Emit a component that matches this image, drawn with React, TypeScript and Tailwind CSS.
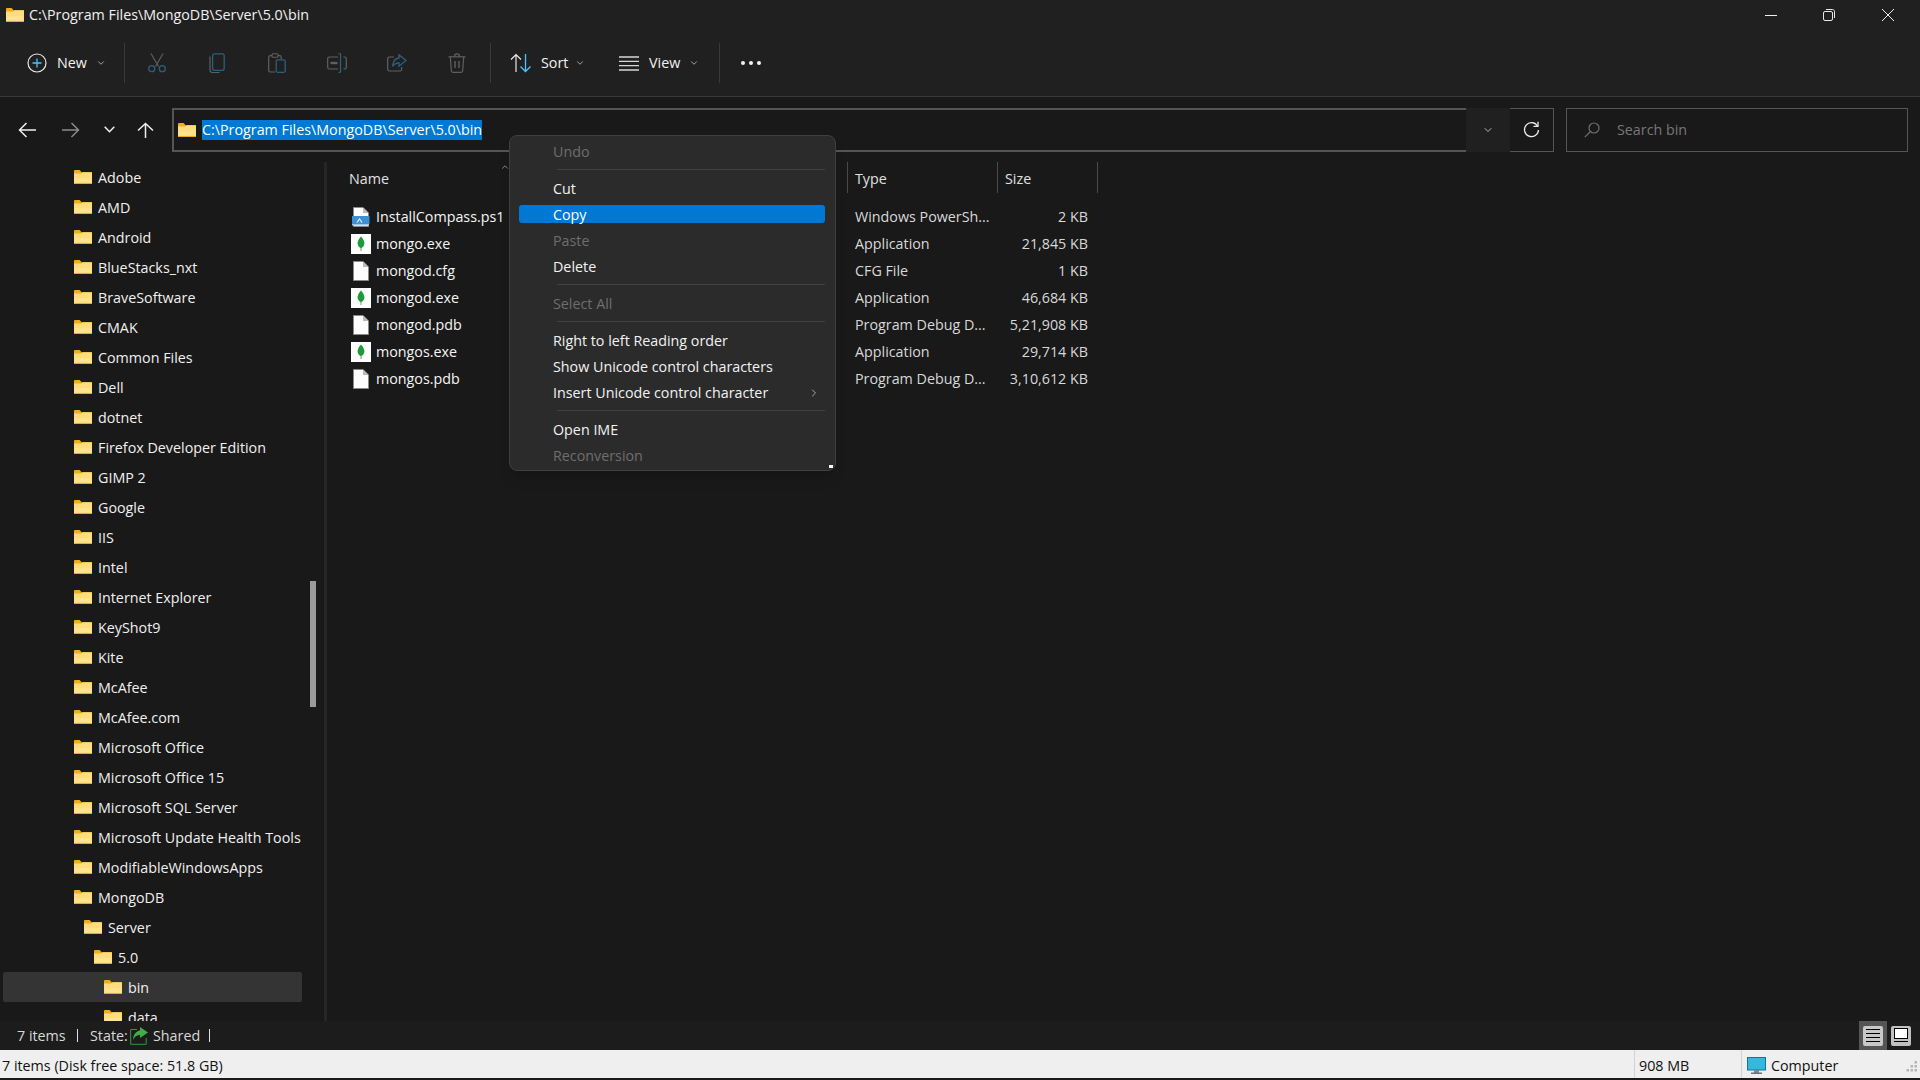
import type { JSX, ReactNode } from "react";
import { ChevronDown, ChevronRight, ChevronUp } from "lucide-react";

const GRAY = "#606060";
const DIM_BLUE = "#2b5f80";

interface TreeItem {
  name: string;
  indent: string;
  selected?: boolean;
}

const base = "pl-[71px]";
const tree: TreeItem[] = [
  { name: "Adobe", indent: base },
  { name: "AMD", indent: base },
  { name: "Android", indent: base },
  { name: "BlueStacks_nxt", indent: base },
  { name: "BraveSoftware", indent: base },
  { name: "CMAK", indent: base },
  { name: "Common Files", indent: base },
  { name: "Dell", indent: base },
  { name: "dotnet", indent: base },
  { name: "Firefox Developer Edition", indent: base },
  { name: "GIMP 2", indent: base },
  { name: "Google", indent: base },
  { name: "IIS", indent: base },
  { name: "Intel", indent: base },
  { name: "Internet Explorer", indent: base },
  { name: "KeyShot9", indent: base },
  { name: "Kite", indent: base },
  { name: "McAfee", indent: base },
  { name: "McAfee.com", indent: base },
  { name: "Microsoft Office", indent: base },
  { name: "Microsoft Office 15", indent: base },
  { name: "Microsoft SQL Server", indent: base },
  { name: "Microsoft Update Health Tools", indent: base },
  { name: "ModifiableWindowsApps", indent: base },
  { name: "MongoDB", indent: base },
  { name: "Server", indent: "pl-[81px]" },
  { name: "5.0", indent: "pl-[91px]" },
  { name: "bin", indent: "pl-[101px]", selected: true },
  { name: "data", indent: "pl-[101px]" },
];

type FileKind = "ps" | "mongo" | "doc";

const files: { name: string; type: string; size: string; kind: FileKind }[] = [
  { name: "InstallCompass.ps1", type: "Windows PowerSh...", size: "2 KB", kind: "ps" },
  { name: "mongo.exe", type: "Application", size: "21,845 KB", kind: "mongo" },
  { name: "mongod.cfg", type: "CFG File", size: "1 KB", kind: "doc" },
  { name: "mongod.exe", type: "Application", size: "46,684 KB", kind: "mongo" },
  { name: "mongod.pdb", type: "Program Debug D...", size: "5,21,908 KB", kind: "doc" },
  { name: "mongos.exe", type: "Application", size: "29,714 KB", kind: "mongo" },
  { name: "mongos.pdb", type: "Program Debug D...", size: "3,10,612 KB", kind: "doc" },
];

function FolderIcon(): JSX.Element {
  return (
    <svg width="18" height="14" viewBox="0 0 18 14" className="shrink-0">
      <path d="M0 1.2C0 .5.5 0 1.2 0h4.4l2 2.2H18V5H0z" fill="#f2ad1c" />
      <path d="M0 3.6h7.2l1.6-1.4H17c.6 0 1 .4 1 1V13c0 .6-.4 1-1 1H1c-.6 0-1-.4-1-1z" fill="#ffdd7c" />
      <path d="M0 13h18c0 .6-.4 1-1 1H1c-.6 0-1-.4-1-1z" fill="#e9a825" />
      <path d="M1 8h16v4.6H1z" fill="#ffe79c" opacity=".6" />
    </svg>
  );
}

function FileIcon({ kind }: { kind: FileKind }): JSX.Element {
  if (kind === "mongo") {
    return (
      <svg width="20" height="20" viewBox="0 0 20 20" className="shrink-0">
        <rect width="20" height="20" fill="#fff" />
        <path d="M10 2.5c2.6 3 3.6 5.2 3.4 7.2-.2 2-1.6 3.6-3.4 4.6-1.8-1-3.2-2.6-3.4-4.6C6.400 7.700 7.400 5.500 10 2.500z" fill="#1e9a3c" />
        <rect x="9.500" y="14" width="1" height="3" fill="#9a8a5c" />
      </svg>
    );
  }
  return (
    <svg width="20" height="20" viewBox="0 0 20 20" className="shrink-0">
      <path d="M2.500.5h9.500l5.500 5.500v13.500h-15z" fill="#fdfdfd" stroke="#8a8a8a" />
      <path d="M12 .5v5.500h5.500z" fill="#b9b9b9" />
      {kind === "ps" && (
        <>
          <path d="M1 9h15l2.500 0v8H1z" fill="#3d8fd6" />
          <path d="M6 15.500l2.500-3.500 2.500 3.500" fill="none" stroke="#e6f3ff" strokeWidth="1.200" />
          <rect x="1" y="17" width="17" height="1.500" fill="#9ec9ee" />
        </>
      )}
    </svg>
  );
}

function CutIcon(): JSX.Element {
  return (
    <svg width="18" height="20" viewBox="0 0 18 20" fill="none">
      <path d="M3 .5l7.500 13M15 .5L7.500 13.500" stroke={GRAY} strokeWidth="1.100" />
      <circle cx="3.700" cy="15.700" r="3" stroke={DIM_BLUE} strokeWidth="1.300" />
      <circle cx="14.300" cy="15.700" r="3" stroke={DIM_BLUE} strokeWidth="1.300" />
    </svg>
  );
}

function CopyIcon(): JSX.Element {
  return (
    <svg width="16" height="20" viewBox="0 0 16 20" fill="none">
      <path d="M1 3.500v13.500c0 1.600 1 2.500 2.500 2.500h7" stroke={GRAY} strokeWidth="1.200" />
      <rect x="3.600" y=".8" width="11.600" height="16.500" rx="2" stroke={DIM_BLUE} strokeWidth="1.300" />
    </svg>
  );
}

function PasteIcon(): JSX.Element {
  return (
    <svg width="18" height="20" viewBox="0 0 18 20" fill="none">
      <path d="M7 19H2.500C1.400 19 .7 18.300.7 17.200V4.500C.7 3.400 1.400 2.700 2.500 2.700H4M10 2.700h1.500c1.100 0 1.800.7 1.800 1.800V6" stroke={GRAY} strokeWidth="1.200" />
      <rect x="4" y=".8" width="6" height="3.400" rx="1" stroke={GRAY} strokeWidth="1.100" />
      <rect x="8.200" y="6.800" width="9" height="12.500" rx="1.500" stroke={DIM_BLUE} strokeWidth="1.300" />
    </svg>
  );
}

function RenameIcon(): JSX.Element {
  return (
    <svg width="20" height="20" viewBox="0 0 20 20" fill="none">
      <path d="M11 4H2.500C1.300 4 .7 4.700.7 5.800v8.400c0 1.100.6 1.800 1.800 1.800H11M16.500 4h1c1.200 0 1.800.7 1.800 1.800v8.400c0 1.100-.6 1.800-1.800 1.800h-1" stroke={GRAY} strokeWidth="1.200" />
      <path d="M11.500.6h2M11.500 19.400h2" stroke={DIM_BLUE} strokeWidth="1.200" />
      <path d="M13.500.6v18.800" stroke={DIM_BLUE} strokeWidth="1.300" />
      <path d="M3.500 10h7" stroke={GRAY} strokeWidth="2.400" />
    </svg>
  );
}

function ShareIcon(): JSX.Element {
  return (
    <svg width="20" height="18" viewBox="0 0 20 18" fill="none">
      <path d="M7 3H2.500C1.300 3 .7 3.700.7 4.800v10.400c0 1.100.6 1.800 1.800 1.800h10.400c1.100 0 1.800-.7 1.800-1.800V13" stroke={GRAY} strokeWidth="1.200" />
      <path d="M12 .8L19 6.500l-7 5.700V9c-3 0-5 1-6.500 3.300C6 7.500 8.500 4.300 12 4z" stroke={DIM_BLUE} strokeWidth="1.300" />
    </svg>
  );
}

function TrashIcon(): JSX.Element {
  return (
    <svg width="18" height="20" viewBox="0 0 18 20" fill="none" stroke={GRAY}>
      <path d="M.5 3.800h17" strokeWidth="1.200" />
      <path d="M6.500 3.500C6.500 1.800 7.500.8 9 .8s2.500 1 2.500 2.700" strokeWidth="1.200" />
      <path d="M2.300 4l1 13.700c.1 1 .7 1.600 1.700 1.600h8c1 0 1.600-.6 1.700-1.600L15.700 4" strokeWidth="1.200" />
      <path d="M7 8v7M11 8v7" strokeWidth="1.400" />
    </svg>
  );
}

function ToolCell({ children }: { children: ReactNode }): JSX.Element {
  return <div className="flex h-[40px] w-[60px] items-center justify-center">{children}</div>;
}

function ToolSep({ className }: { className: string }): JSX.Element {
  return <div className={`h-[40px] w-px bg-[#393939] ${className}`} />;
}

function Toolbar(): JSX.Element {
  return (
    <div className="flex h-[66px] items-center pl-[27px] text-[#f2f2f2]">
      <svg width="20" height="20" viewBox="0 0 20 20" fill="none">
        <circle cx="10" cy="10" r="9" stroke="#e8e8e8" strokeWidth="1.200" />
        <path d="M10 5.500v9M5.500 10h9" stroke="#4cc2ff" strokeWidth="1.300" />
      </svg>
      <span className="ml-[10px] w-[39px]">New</span>
      <ChevronDown size={10} className="text-[#bdbdbd]" />
      <ToolSep className="ml-[18px]" />
      <div className="ml-[2px] flex">
        <ToolCell><CutIcon /></ToolCell>
        <ToolCell><CopyIcon /></ToolCell>
        <ToolCell><PasteIcon /></ToolCell>
        <ToolCell><RenameIcon /></ToolCell>
        <ToolCell><ShareIcon /></ToolCell>
        <ToolCell><TrashIcon /></ToolCell>
      </div>
      <ToolSep className="ml-[3px]" />
      <svg width="22" height="20" viewBox="0 0 22 20" fill="none" className="ml-[19px]">
        <path d="M6 19V1.500M1 6.500l5-5 5 5" stroke="#e8e8e8" strokeWidth="1.200" />
        <path d="M15.500 1v17.500M10.500 13.500l5 5 5-5" stroke="#4cc2ff" strokeWidth="1.300" />
      </svg>
      <span className="ml-[9px] w-[34px]">Sort</span>
      <ChevronDown size={10} className="text-[#bdbdbd]" />
      <svg width="20" height="15" viewBox="0 0 20 15" fill="none" stroke="#d6d6d6" strokeWidth="1.300" className="ml-[34px]">
        <path d="M0 1h20M0 5.300h20M0 9.700h20M0 14h20" />
      </svg>
      <span className="ml-[10px] w-[40px]">View</span>
      <ChevronDown size={10} className="text-[#bdbdbd]" />
      <ToolSep className="ml-[20px]" />
      <svg width="20" height="4" viewBox="0 0 20 4" fill="#f2f2f2" className="ml-[21px]">
        <circle cx="2" cy="2" r="2" />
        <circle cx="10" cy="2" r="2" />
        <circle cx="18" cy="2" r="2" />
      </svg>
    </div>
  );
}

function NavBar(): JSX.Element {
  return (
    <div className="flex h-[65px] items-center">
      <svg width="18" height="16" viewBox="0 0 18 16" fill="none" stroke="#f0f0f0" strokeWidth="1.500" className="ml-[18px]">
        <path d="M18 8H1.500M8.500 1l-7 7 7 7" />
      </svg>
      <svg width="18" height="16" viewBox="0 0 18 16" fill="none" stroke="#8a8a8a" strokeWidth="1.500" className="ml-[26px]">
        <path d="M0 8h16.500M9.500 1l7 7-7 7" />
      </svg>
      <svg width="11" height="7" viewBox="0 0 11 7" fill="none" stroke="#f0f0f0" strokeWidth="1.500" className="ml-[24px]">
        <path d="M.7.7l4.800 5 4.800-5" />
      </svg>
      <svg width="17" height="16" viewBox="0 0 17 16" fill="none" stroke="#f0f0f0" strokeWidth="1.500" className="ml-[22px]">
        <path d="M8.500 16V1.500M1 8.500l7.500-7 7.500 7" />
      </svg>
      <div className="ml-[18px] flex h-[44px] w-[1294px] items-center gap-[6px] border-y-2 border-l-2 border-[#555555] pl-[4px]">
        <FolderIcon />
        <span className="flex h-[20px] items-center bg-[#0078d4] text-white">C:\Program Files\MongoDB\Server\5.0\bin</span>
      </div>
      <div className="flex h-[44px] w-[44px] items-center justify-center bg-[#202020]">
        <ChevronDown size={12} className="text-[#b8b8b8]" />
      </div>
      <div className="flex h-[44px] w-[44px] items-center justify-center border-y border-r border-[#555555]">
        <svg width="17" height="17" viewBox="0 0 17 17" fill="none" stroke="#ededed" strokeWidth="1.300">
          <path d="M14.500 5A7 7 0 1 0 15.500 9" />
          <path d="M15 .8V5.300h-4.500" />
        </svg>
      </div>
      <div className="ml-[12px] flex h-[44px] w-[342px] items-center border border-[#555555] pl-[17px] text-[#777777]">
        <svg width="16" height="16" viewBox="0 0 16 16" fill="none" stroke="#6f6f6f" strokeWidth="1.200">
          <circle cx="10" cy="6" r="5" />
          <path d="M6.500 9.500L.8 15.200" />
        </svg>
        <span className="ml-[17px]">Search bin</span>
      </div>
    </div>
  );
}

function Sidebar(): JSX.Element {
  return (
    <div className="w-[324px] shrink-0 overflow-hidden">
      <div className="flex">
        <div className="ml-[3px] w-[299px] shrink-0">
          {tree.map((item) => (
            <div
              key={item.name}
              className={`flex h-[30px] items-center gap-[6px] rounded-[2px] ${item.indent} ${item.selected ? "bg-[#343434]" : ""}`}
            >
              <FolderIcon />
              <span className="whitespace-nowrap pt-[2px]">{item.name}</span>
            </div>
          ))}
        </div>
        <div className="ml-[8px] mt-[419px] h-[126px] w-[6px] shrink-0 bg-[#9a9a9a]" />
      </div>
    </div>
  );
}

function FileTable(): JSX.Element {
  return (
    <div className="flex-1 pl-[22px]">
      <div className="flex h-[31px] text-[#e0e0e0]">
        <span className="flex w-[151px] items-center pt-[3px]">Name</span>
        <ChevronUp size={10} className="text-[#a0a0a0]" />
        <div className="ml-[337px] w-[150px] border-l border-[#4a4a4a] pl-[7px] leading-[34px]">Type</div>
        <div className="w-[100px] border-l border-[#4a4a4a] pl-[7px] leading-[34px]">Size</div>
        <div className="w-px bg-[#4a4a4a]" />
      </div>
      <div className="mt-[10px]">
        {files.map((file) => (
          <div key={file.name} className="flex h-[27px] items-center">
            <div className="flex w-[506px] items-center gap-[5px] pl-[2px]">
              <FileIcon kind={file.kind} />
              <span className="text-[#f5f5f5]">{file.name}</span>
            </div>
            <span className="w-[142px] whitespace-nowrap text-[#d8d8d8]">{file.type}</span>
            <span className="w-[91px] text-right text-[#d8d8d8]">{file.size}</span>
          </div>
        ))}
      </div>
    </div>
  );
}

function MenuItem({ label, disabled, arrow }: { label: string; disabled?: boolean; arrow?: boolean }): JSX.Element {
  return (
    <div className={`flex h-[26px] items-center pl-[43px] ${disabled ? "text-[#6e6e6e]" : "text-[#f2f2f2]"}`}>
      {label}
      {arrow && <ChevronRight size={12} className="ml-auto mr-[15px] text-[#a8a8a8]" />}
    </div>
  );
}

function MenuSep(): JSX.Element {
  return (
    <div className="h-[11px] pl-[47px] pr-[10px] pt-[4px]">
      <div className="h-px bg-[#414141]" />
    </div>
  );
}

function ContextMenu(): JSX.Element {
  return (
    <div className="absolute left-[509px] top-[135px] h-[336px] w-[327px] rounded-[8px] border border-[#3f3f3f] bg-[#2b2b2b] pt-[3px] shadow-lg">
      <MenuItem label="Undo" disabled />
      <MenuSep />
      <MenuItem label="Cut" />
      <div className="mb-[5px] ml-[9px] mr-[10px] mt-[3px] flex h-[18px] items-center rounded-[3px] bg-[#0078d4] pl-[34px] pt-[2px] text-white">
        Copy
      </div>
      <MenuItem label="Paste" disabled />
      <MenuItem label="Delete" />
      <MenuSep />
      <MenuItem label="Select All" disabled />
      <MenuSep />
      <MenuItem label="Right to left Reading order" />
      <MenuItem label="Show Unicode control characters" />
      <MenuItem label="Insert Unicode control character" arrow />
      <MenuSep />
      <MenuItem label="Open IME" />
      <MenuItem label="Reconversion" disabled />
      <div className="absolute bottom-[2px] right-[2px] h-[3px] w-[4px] bg-white" />
    </div>
  );
}

function StatusBar(): JSX.Element {
  return (
    <div className="flex h-[29px] items-center bg-[#1c1c1c] pl-[17px] text-[#d8d8d8]">
      <span className="w-[60px]">7 items</span>
      <div className="h-[13px] w-px bg-[#e0e0e0]" />
      <span className="ml-[12px] w-[40px]">State:</span>
      <svg width="18" height="18" viewBox="0 0 18 18" fill="none">
        <path d="M7 2.500H.7v14.800h15.500V11" stroke="#2f9a3f" strokeWidth="1" />
        <path d="M10 0l8 5.500-8 5.500V8C7 8 4.500 9.500 3 13 3 8 6 4 10 3.500z" fill="#3dae4a" />
      </svg>
      <span className="ml-[5px] w-[56px]">Shared</span>
      <div className="h-[13px] w-px bg-[#e0e0e0]" />
      <div className="ml-auto flex h-[29px] w-[28px] items-center justify-center bg-[#555555]">
        <div className="flex h-[20px] w-[20px] flex-col items-center justify-center gap-[3px] rounded-[2px] bg-[#c8c8c8]">
          <div className="h-px w-[14px] bg-black" />
          <div className="h-px w-[14px] bg-black" />
          <div className="h-px w-[14px] bg-black" />
          <div className="h-px w-[14px] bg-black" />
        </div>
      </div>
      <div className="ml-[4px] mr-[9px] flex h-[20px] w-[20px] flex-col items-center rounded-[2px] bg-[#c0c0c0] pt-[2px]">
        <div className="h-[11px] w-[14px] border border-black bg-white" />
        <div className="mt-[2px] h-px w-[14px] bg-black" />
      </div>
    </div>
  );
}

function BottomBar(): JSX.Element {
  return (
    <div className="flex h-[28px] items-center bg-[#efefef] pl-[2px] text-[#111111]">
      <span className="w-[1632px] pt-[4px]">7 items (Disk free space: 51.8 GB)</span>
      <div className="flex h-full w-[107px] items-center border-l border-[#d2d2d2] pl-[4px] pt-[4px]">908 MB</div>
      <div className="flex h-full flex-1 items-center border-l border-[#d2d2d2] pl-[5px] pt-[4px]">
        <svg width="19" height="18" viewBox="0 0 19 18">
          <rect x=".5" y=".5" width="18" height="12.500" fill="#35b8dc" stroke="#1c6f9a" />
          <rect x="7" y="13" width="5" height="3" fill="#7f8a92" />
          <rect x="4" y="15.500" width="11" height="1.500" fill="#6a747c" />
        </svg>
        <span className="ml-[5px]">Computer</span>
        <svg width="12" height="12" viewBox="0 0 12 12" fill="#b5b5b5" className="mb-[-2px] ml-auto mr-[2px]">
          <rect x="8.500" y="0" width="2.500" height="2.500" />
          <rect x="4.500" y="4" width="2.500" height="2.500" />
          <rect x="8.500" y="4" width="2.500" height="2.500" />
          <rect x=".5" y="8" width="2.500" height="2.500" />
          <rect x="4.500" y="8" width="2.500" height="2.500" />
          <rect x="8.500" y="8" width="2.500" height="2.500" />
        </svg>
      </div>
    </div>
  );
}

export default function App(): JSX.Element {
  return (
    <div className="relative flex h-[1080px] w-[1920px] flex-col overflow-hidden bg-[#191919] font-['Open_Sans',sans-serif] text-[14.3px] text-[#f0f0f0]">
      <div className="h-[97px] shrink-0 border-b border-[#3a3a3a] bg-[#202020]">
        <div className="flex h-[30px] items-center pl-[6px]">
          <FolderIcon />
          <span className="ml-[5px] text-[#f0f0f0]">C:\Program Files\MongoDB\Server\5.0\bin</span>
          <div className="ml-auto flex items-center text-[#f0f0f0]">
            <div className="h-px w-[12px] bg-[#f0f0f0]" />
            <svg width="12" height="12" viewBox="0 0 12 12" fill="none" stroke="#e6e6e6" className="ml-[46px]">
              <rect x=".5" y="2.500" width="9" height="9" rx="1.500" />
              <path d="M3 .5h6.500c1.200 0 2 .8 2 2V9" />
            </svg>
            <svg width="12" height="12" viewBox="0 0 12 12" fill="none" stroke="#f0f0f0" className="ml-[47px] mr-[26px]">
              <path d="M0 0l12 12M12 0L0 12" />
            </svg>
          </div>
        </div>
        <Toolbar />
      </div>
      <NavBar />
      <div className="flex min-h-0 flex-1">
        <Sidebar />
        <div className="w-[3px] shrink-0 bg-[#262626]" />
        <FileTable />
      </div>
      <StatusBar />
      <BottomBar />
      <div className="h-[2px] shrink-0 bg-[#1a1a1a]" />
      <ContextMenu />
    </div>
  );
}
